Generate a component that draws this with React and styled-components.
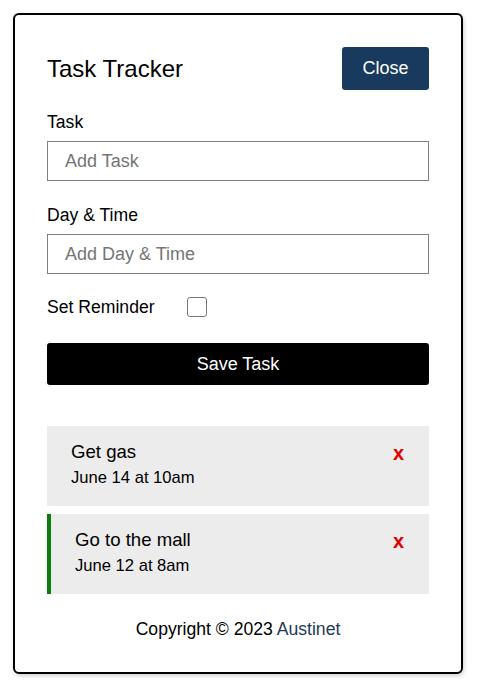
import React from "react"
import styled, { createGlobalStyle } from "styled-components"

const GlobalStyle = createGlobalStyle`
  * { box-sizing: border-box; }
  body {
    margin: 0;
    background: #fff;
    font-family: "Liberation Sans", Arial, sans-serif;
    color: #000;
  }
`

const tasks = [
  { id: 1, text: "Get gas", day: "June 14 at 10am", reminder: false },
  { id: 2, text: "Go to the mall", day: "June 12 at 8am", reminder: true },
]

export default function App() {
  return (
    <>
      <GlobalStyle />
      <Container>
        <Header>
          <Title>Task Tracker</Title>
          <CloseButton>Close</CloseButton>
        </Header>
        <form onSubmit={(e) => e.preventDefault()}>
          <FormControl>
            <Label>Task</Label>
            <Input type="text" placeholder="Add Task" />
          </FormControl>
          <FormControl>
            <Label>Day &amp; Time</Label>
            <Input type="text" placeholder="Add Day & Time" />
          </FormControl>
          <CheckRow>
            <Label as="span" $inline>Set Reminder</Label>
            <Checkbox type="checkbox" />
          </CheckRow>
          <SaveButton type="submit">Save Task</SaveButton>
        </form>
        <TaskList>
          {tasks.map((task) => (
            <TaskItem key={task.id} $reminder={task.reminder}>
              <TaskTitle>
                {task.text}
                <Remove>x</Remove>
              </TaskTitle>
              <TaskDay>{task.day}</TaskDay>
            </TaskItem>
          ))}
        </TaskList>
        <Footer>
          Copyright © 2023 <FooterLink href="#">Austinet</FooterLink>
        </Footer>
      </Container>
    </>
  )
}

const Container = styled.div`
  width: 450px;
  margin: 13px 13px 14px;
  border: 2px solid #000;
  border-radius: 6px;
  padding: 32px 32px 32px;
  box-shadow: 1px 2px 4px rgba(0, 0, 0, 0.18);
  background: #fff;
`

const Header = styled.header`
  display: flex;
  align-items: center;
  justify-content: space-between;
  margin-bottom: 20px;
`

const Title = styled.h1`
  margin: 0;
  font-size: 24px;
  font-weight: 400;
`

const CloseButton = styled.button`
  width: 87px;
  height: 43px;
  border: none;
  border-radius: 3px;
  background: #173a5e;
  color: #fff;
  font-family: inherit;
  font-size: 18px;
  cursor: pointer;
`

const FormControl = styled.div`
  margin-bottom: 22px;
`

const Label = styled.label`
  display: ${(p) => (p.$inline ? "inline-block" : "block")};
  font-size: 17.6px;
  line-height: 21px;
  padding-top: ${(p) => (p.$inline ? "0" : "2px")};
  margin-bottom: ${(p) => (p.$inline ? "0" : "8px")};
`

const Input = styled.input`
  display: block;
  width: 100%;
  height: 40px;
  margin: 0;
  padding: 0 17px;
  border: 1px solid #808080;
  border-radius: 0;
  font-family: inherit;
  font-size: 18px;
  &::placeholder {
    color: #757575;
  }
`

const CheckRow = styled.div`
  display: flex;
  align-items: center;
  height: 22px;
  margin-bottom: 25px;
`

const Checkbox = styled.input`
  appearance: none;
  width: 20px;
  height: 20px;
  margin: 0 0 0 32px;
  border: 1px solid #767676;
  border-radius: 3px;
  background: #fff;
`

const SaveButton = styled.button`
  display: block;
  width: 100%;
  height: 42px;
  border: none;
  border-radius: 3px;
  background: #000;
  color: #fff;
  font-family: inherit;
  font-size: 18px;
  cursor: pointer;
`

const TaskList = styled.div`
  margin-top: 41px;
  display: flex;
  flex-direction: column;
  gap: 8px;
`

const TaskItem = styled.div`
  height: 80px;
  background: #ececec;
  padding: 13px 25px 0 24px;
  border-left: ${(p) => (p.$reminder ? "4px solid #0a7d0a" : "none")};
`

const TaskTitle = styled.h3`
  display: flex;
  align-items: center;
  justify-content: space-between;
  margin: 0 0 4px;
  font-size: 18.6px;
  line-height: 21px;
  font-weight: 400;
`

const Remove = styled.span`
  color: #e00000;
  font-size: 20px;
  font-weight: 700;
  margin-top: 4px;
  cursor: pointer;
`

const TaskDay = styled.p`
  margin: 0;
  font-size: 16.6px;
`

const Footer = styled.footer`
  margin-top: 25px;
  text-align: center;
  font-size: 17.6px;
  line-height: 21px;
`

const FooterLink = styled.a`
  color: #1e3a56;
  text-decoration: none;
`
